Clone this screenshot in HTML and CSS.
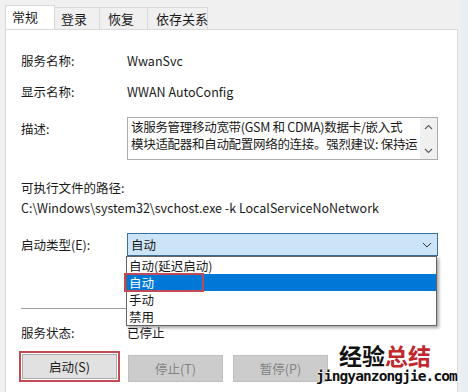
FILE: index.html
```html
<!DOCTYPE html>
<html lang="zh-CN">

<head>
    <meta charset="UTF-8">
    <title>WwanSvc 的属性</title>
    <link rel="stylesheet" href="styles.css">
</head>

<body>

    <div class="window">
        <div class="tabs">
            <div class="tab active">常规</div>
            <div class="tab">登录</div>
            <div class="tab">恢复</div>
            <div class="tab">依存关系</div>
        </div>

        <div class="panel">
            <div class="row row-name">
                <span class="label">服务名称:</span>
                <span class="value">WwanSvc</span>
            </div>
            <div class="row row-display">
                <span class="label">显示名称:</span>
                <span class="value">WWAN AutoConfig</span>
            </div>
            <div class="row row-desc">
                <span class="label">描述:</span>
                <div class="textbox">
                    <div class="textbox-text">
                        该服务管理移动宽带(GSM 和 CDMA)数据卡/嵌入式<br>
                        模块适配器和自动配置网络的连接。强烈建议: 保持运
                    </div>
                    <div class="scrollbar">
                        <svg width="9" height="6" viewBox="0 0 9 6">
                            <path d="M1 5 L4.5 1.5 L8 5" fill="none" stroke="#606060" stroke-width="1.2"/>
                        </svg>
                        <svg width="9" height="6" viewBox="0 0 9 6">
                            <path d="M1 1 L4.5 4.5 L8 1" fill="none" stroke="#606060" stroke-width="1.2"/>
                        </svg>
                    </div>
                </div>
            </div>

            <div class="path-label">可执行文件的路径:</div>
            <div class="path">C:\Windows\system32\svchost.exe -k LocalServiceNoNetwork</div>

            <div class="row row-startup">
                <span class="label">启动类型(E):</span>
                <div class="combo">
                    <span>自动</span>
                    <svg class="chevron" width="10" height="6" viewBox="0 0 10 6">
                        <path d="M1 1 L5 5 L9 1" fill="none" stroke="#333" stroke-width="1"/>
                    </svg>
                </div>
            </div>

            <hr class="divider">

            <div class="row row-status">
                <span class="label">服务状态:</span>
                <span class="value">已停止</span>
            </div>

            <div class="buttons">
                <div class="mark">
                    <button class="btn">启动(S)</button>
                </div>
                <button class="btn" disabled>停止(T)</button>
                <button class="btn" disabled>暂停(P)</button>
            </div>

            <ul class="dropdown">
                <li>自动(延迟启动)</li>
                <li class="selected">自动</li>
                <li>手动</li>
                <li>禁用</li>
            </ul>
            <div class="mark-item"></div>
        </div>

        <div class="watermark">
            <div class="wm-title">经验<span class="wm-red">总结</span></div>
            <div class="wm-url">jingyanzongjie.com</div>
        </div>
    </div>

</body>

</html>
```

FILE: styles.css
```css
html,
body {
    margin: 0;
    padding: 0;
}

body {
    width: 468px;
    height: 392px;
    overflow: hidden;
    background-color: #f0f0f0;
    font-family: "Noto Sans CJK SC", "Noto Sans", sans-serif;
    font-size: 12.5px;
    color: #1a1a1a;
}

.window {
    position: relative;
    height: 392px;
    width: 468px;
    padding: 4px 2px 0 5px;
    box-sizing: border-box;
    border-right: 8px solid #e9eef3;
}

.tabs {
    display: flex;
    align-items: flex-end;
    height: 25px;
}

.tab {
    height: 22px;
    line-height: 21px;
    padding-left: 6px;
    border: 1px solid #d9d9d9;
    border-bottom: none;
    border-left: none;
    background-color: #f0f0f0;
    box-sizing: border-box;
    font-size: 13px;
    white-space: nowrap;
}

.tab.active {
    height: 25px;
    width: 50px;
    background-color: #fff;
    border-left: 1px solid #d9d9d9;
    position: relative;
    top: 1px;
    line-height: 22px;
}

.tab:nth-child(2) {
    width: 45px;
}

.tab:nth-child(3) {
    width: 48px;
    padding-left: 8px;
}

.tab:nth-child(4) {
    width: 60px;
    padding-left: 8px;
}

.panel {
    position: relative;
    height: 363px;
    background-color: #fff;
    border: 1px solid #d9d9d9;
    border-bottom: none;
    padding: 20px 0 0 15px;
    box-sizing: border-box;
}

.row {
    display: flex;
    align-items: center;
    height: 20px;
}

.label {
    width: 106px;
    flex-shrink: 0;
}

.row-display {
    margin-top: 11px;
}

.row-desc {
    margin-top: 16px;
    height: 43px;
    align-items: flex-start;
}

.row-desc .label {
    padding-top: 2px;
}

.textbox {
    width: 311px;
    height: 43px;
    border: 1px solid #abadb3;
    box-sizing: border-box;
    display: flex;
}

.textbox-text {
    flex: 1;
    padding: 0 3px;
    line-height: 17px;
    letter-spacing: -0.3px;
    white-space: nowrap;
    overflow: hidden;
}

.scrollbar {
    width: 17px;
    background-color: #f0f0f0;
    display: flex;
    flex-direction: column;
    justify-content: space-between;
    align-items: center;
    padding: 6px 0 5px;
    box-sizing: border-box;
}

.path-label {
    margin-top: 18px;
    height: 20px;
    line-height: 20px;
}

.path {
    height: 20px;
    line-height: 20px;
}

.row-startup {
    margin-top: 15px;
    height: 23px;
}

.combo {
    width: 311px;
    height: 23px;
    background-color: #cce4f7;
    border: 1px solid #3d6f9b;
    box-sizing: border-box;
    display: flex;
    align-items: center;
    justify-content: space-between;
    padding: 0 5px 0 3px;
}

.divider {
    margin: 52px 0 0 0;
    width: 416px;
    border: none;
    border-top: 1px solid #a0a0a0;
}

.row-status {
    margin-top: 13px;
}

.buttons {
    display: flex;
    align-items: flex-start;
    gap: 10px;
    margin-top: 9px;
    margin-left: -2px;
}

.btn {
    width: 95px;
    height: 25px;
    font-family: inherit;
    font-size: 12.5px;
    background-color: #e1e1e1;
    border: 1px solid #adadad;
    color: #1a1a1a;
    padding: 0;
}

.btn:disabled {
    background-color: #cccccc;
    border-color: #bfbfbf;
    color: #838383;
    height: 27px;
    margin-top: 4px;
}

.mark {
    border: 2px solid #c24a55;
    padding: 1px;
    margin-right: -2px;
}

.dropdown {
    position: absolute;
    left: 120px;
    top: 226px;
    width: 311px;
    margin: 0;
    padding: 0;
    list-style: none;
    background-color: #fff;
    border: 1px solid #646464;
    box-sizing: border-box;
    box-shadow: 2px 2px 3px rgba(0, 0, 0, 0.35);
}

.dropdown li {
    height: 17px;
    line-height: 17px;
    padding-left: 2px;
}

.dropdown li.selected {
    background-color: #0078d7;
    color: #fff;
}

.mark-item {
    position: absolute;
    left: 118px;
    top: 243px;
    width: 76px;
    height: 15px;
    border: 2px solid #c24a55;
}

.watermark {
    position: absolute;
    left: 316px;
    top: 344px;
    width: 138px;
    text-align: center;
    font-weight: bold;
    text-shadow: 0 0 2px #fff, 0 0 2px #fff;
}

.wm-title {
    font-size: 23px;
    line-height: 23px;
    height: 23px;
    color: #111;
}

.wm-red {
    color: #c0282e;
}

.wm-url {
    margin-top: 2px;
    font-family: "DejaVu Sans Mono", monospace;
    font-size: 14.5px;
    line-height: 15px;
    letter-spacing: -0.9px;
    color: #111;
}
```
